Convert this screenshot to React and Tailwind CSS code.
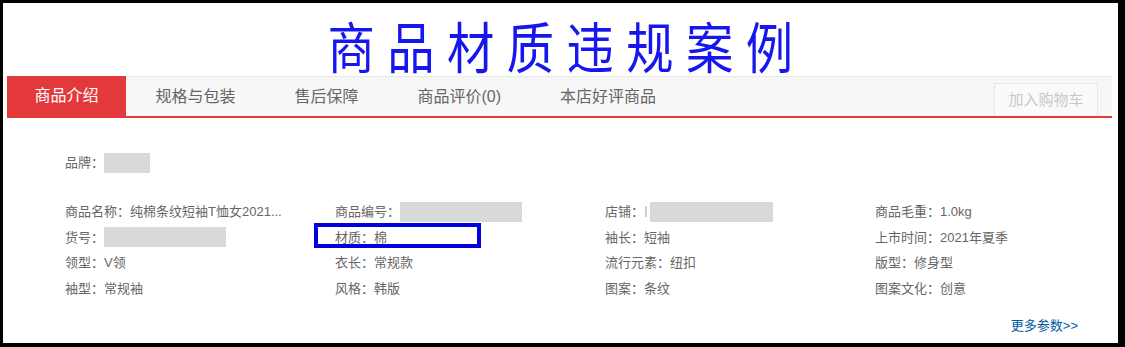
import React from "react";

const FONT = { fontFamily: '"Liberation Sans", "Noto Sans CJK SC", sans-serif' };

function Box({ w = 122, className = "" }) {
  return <span className={`inline-block h-[20px] bg-[#d9d9d9] ${className}`} style={{ width: w }} />;
}

function Cell({ label, children }) {
  return (
    <div className="h-[25.6px] flex items-center whitespace-nowrap">
      <span>{label}：</span>
      {children}
    </div>
  );
}

export default function App() {
  return (
    <div
      className="w-[1125px] h-[347px] bg-black pt-[3px] pl-[3px] pr-[7px] pb-[4px]"
      style={FONT}
    >
      <div className="w-full h-full bg-white flex flex-col">
        {/* Title */}
        <div className="h-[73px] pt-[10px] flex items-center justify-center">
          <div
            className="text-[55px] leading-none text-[#1616ee] scale-x-[0.86] tracking-[14.5px] pl-[14.5px] whitespace-nowrap"
            style={{ fontFamily: '"Noto Sans CJK SC", sans-serif' }}
          >
            商品材质违规案例
          </div>
        </div>

        {/* Tab bar */}
        <div className="ml-[4px] mr-[6px] h-[42px] bg-[#f7f7f7] border-t border-[#e8e8e8] border-b-2 border-b-[#e4393c] flex items-stretch text-[16px] text-[#666]">
          <div className="w-[119px] -mt-px bg-[#e4393c] text-white flex items-center justify-center">
            商品介绍
          </div>
          <div className="px-[29.5px] flex items-center">规格与包装</div>
          <div className="px-[29.5px] flex items-center">售后保障</div>
          <div className="px-[29.5px] flex items-center">商品评价(0)</div>
          <div className="px-[29.5px] flex items-center">本店好评商品</div>
          <div className="flex-1" />
          <div className="self-end mr-[14px] w-[104px] h-[33px] bg-[#fafafa] border border-[#e6e6e6] border-b-0 text-[15px] text-[#c8c8c8] flex items-center justify-center">
            加入购物车
          </div>
        </div>

        {/* Content */}
        <div className="pl-[62px] pr-[40px] text-[13px] text-[#666]">
          <div className="mt-[35px] h-[20px] flex items-center">
            <span>品牌：</span>
            <Box w={46} />
          </div>

          <div className="mt-[26px] grid grid-cols-[270px_270px_270px_1fr]">
            <Cell label="商品名称">
              <span>纯棉条纹短袖T恤女2021...</span>
            </Cell>
            <Cell label="商品编号">
              <Box />
            </Cell>
            <Cell label="店铺">
              <span className="inline-block w-[2px] h-[11px] bg-[#d0d0d0] ml-[1px] mr-[3px]" />
              <Box w={123} />
            </Cell>
            <Cell label="商品毛重">
              <span>1.0kg</span>
            </Cell>

            <Cell label="货号">
              <Box />
            </Cell>
            <div className="relative">
              <Cell label="材质">
                <span>棉</span>
              </Cell>
              <div className="absolute left-[-21px] top-[-2px] w-[167px] h-[25px] border-[4px] border-[#0000e0]" />
            </div>
            <Cell label="袖长">
              <span>短袖</span>
            </Cell>
            <Cell label="上市时间">
              <span>2021年夏季</span>
            </Cell>

            <Cell label="领型">
              <span>V领</span>
            </Cell>
            <Cell label="衣长">
              <span>常规款</span>
            </Cell>
            <Cell label="流行元素">
              <span>纽扣</span>
            </Cell>
            <Cell label="版型">
              <span>修身型</span>
            </Cell>

            <Cell label="袖型">
              <span>常规袖</span>
            </Cell>
            <Cell label="风格">
              <span>韩版</span>
            </Cell>
            <Cell label="图案">
              <span>条纹</span>
            </Cell>
            <Cell label="图案文化">
              <span>创意</span>
            </Cell>
          </div>

          <div className="mt-[14px] h-[20px] flex items-center justify-end text-[#005aa0]">
            更多参数&gt;&gt;
          </div>
        </div>
      </div>
    </div>
  );
}
